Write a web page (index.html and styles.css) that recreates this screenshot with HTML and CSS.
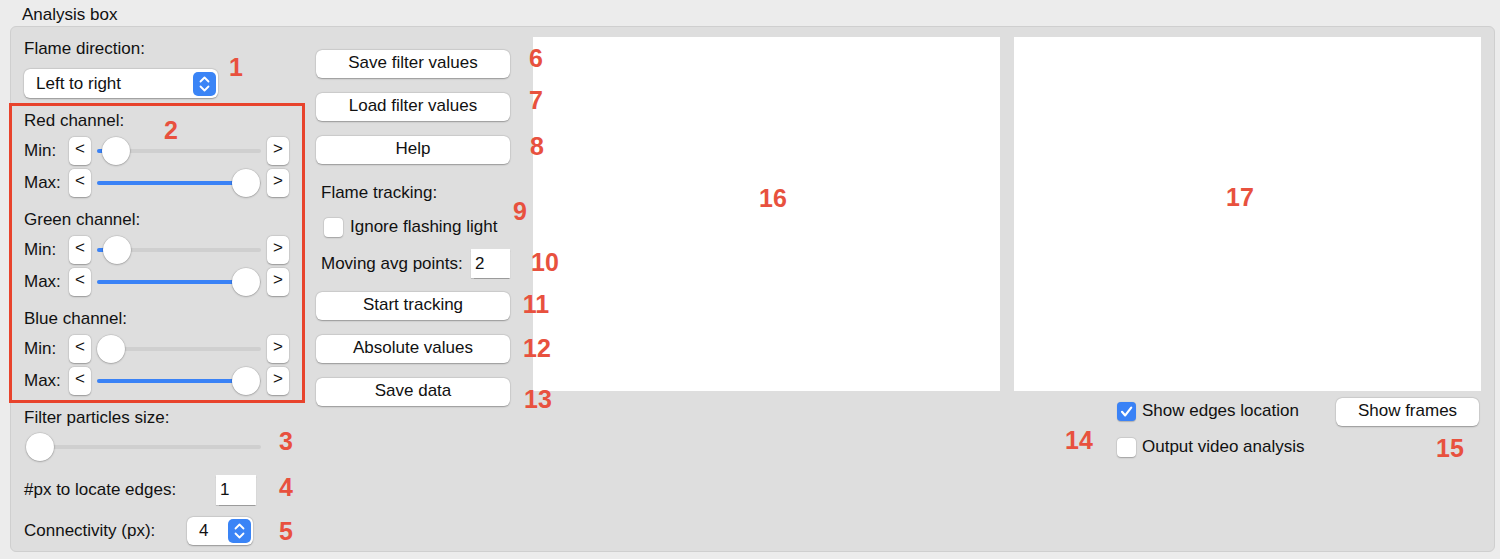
FILE: index.html
```html
<!DOCTYPE html>
<html>
<head>
<meta charset="utf-8">
<link rel="stylesheet" href="styles.css">
</head>
<body>
<div class="title">Analysis box</div>
<div class="group">
  <div class="left">
    <div class="lbl">Flame direction:</div>
    <div class="popup wide">
      <span>Left to right</span>
      <svg class="stepper" width="23" height="24" viewBox="0 0 23 24"><rect width="23" height="24" rx="5" fill="#3a84f6"/><path d="M7.5 9.5 L11.5 5.5 L15.5 9.5" stroke="#fff" stroke-width="1.8" fill="none" stroke-linecap="round" stroke-linejoin="round"/><path d="M7.5 14.5 L11.5 18.5 L15.5 14.5" stroke="#fff" stroke-width="1.8" fill="none" stroke-linecap="round" stroke-linejoin="round"/></svg>
    </div>

    <div class="chan">
      <div class="lbl">Red channel:</div>
      <div class="srow first">
        <span class="rl">Min:</span><div class="sbtn">&lt;</div>
        <div class="slider" style="--v:0.04"><div class="track"></div><div class="fill"></div><div class="thumb"></div></div>
        <div class="sbtn">&gt;</div>
      </div>
      <div class="srow">
        <span class="rl">Max:</span><div class="sbtn">&lt;</div>
        <div class="slider" style="--v:0.995"><div class="track"></div><div class="fill"></div><div class="thumb"></div></div>
        <div class="sbtn">&gt;</div>
      </div>
    </div>

    <div class="chan">
      <div class="lbl">Green channel:</div>
      <div class="srow first">
        <span class="rl">Min:</span><div class="sbtn">&lt;</div>
        <div class="slider" style="--v:0.045"><div class="track"></div><div class="fill"></div><div class="thumb"></div></div>
        <div class="sbtn">&gt;</div>
      </div>
      <div class="srow">
        <span class="rl">Max:</span><div class="sbtn">&lt;</div>
        <div class="slider" style="--v:0.995"><div class="track"></div><div class="fill"></div><div class="thumb"></div></div>
        <div class="sbtn">&gt;</div>
      </div>
    </div>

    <div class="chan">
      <div class="lbl">Blue channel:</div>
      <div class="srow first">
        <span class="rl">Min:</span><div class="sbtn">&lt;</div>
        <div class="slider" style="--v:0"><div class="track"></div><div class="fill"></div><div class="thumb"></div></div>
        <div class="sbtn">&gt;</div>
      </div>
      <div class="srow">
        <span class="rl">Max:</span><div class="sbtn">&lt;</div>
        <div class="slider" style="--v:0.995"><div class="track"></div><div class="fill"></div><div class="thumb"></div></div>
        <div class="sbtn">&gt;</div>
      </div>
    </div>

    <div class="lbl filt">Filter particles size:</div>
    <div class="prow">
      <div class="slider long" style="--v:0"><div class="track"></div><div class="fill"></div><div class="thumb"></div></div>
    </div>

    <div class="pxrow">
      <span class="pxl">#px to locate edges:</span>
      <div class="field">1</div>
    </div>

    <div class="conrow">
      <span class="conl">Connectivity (px):</span>
      <div class="popup small">
        <span>4</span>
        <svg class="stepper" width="23" height="24" viewBox="0 0 23 24"><rect width="23" height="24" rx="5" fill="#3a84f6"/><path d="M7.5 9.5 L11.5 5.5 L15.5 9.5" stroke="#fff" stroke-width="1.8" fill="none" stroke-linecap="round" stroke-linejoin="round"/><path d="M7.5 14.5 L11.5 18.5 L15.5 14.5" stroke="#fff" stroke-width="1.8" fill="none" stroke-linecap="round" stroke-linejoin="round"/></svg>
      </div>
    </div>
  </div>

  <div class="mid">
    <div class="btn">Save filter values</div>
    <div class="btn gap">Load filter values</div>
    <div class="btn gap">Help</div>
    <div class="lbl mlbl">Flame tracking:</div>
    <div class="chkrow ignore"><span class="cb"></span><span>Ignore flashing light</span></div>
    <div class="avg"><span>Moving avg points:</span><div class="field">2</div></div>
    <div class="btn start">Start tracking</div>
    <div class="btn gap">Absolute values</div>
    <div class="btn gap">Save data</div>
  </div>

  <div class="right">
    <div class="panels">
      <div class="panel"></div>
      <div class="panel"></div>
    </div>
    <div class="below">
      <div class="checks">
        <div class="chkrow"><span class="cb on"><svg width="19" height="19" viewBox="0 0 19 19"><path d="M5 9.8 L8.2 13.4 L14.2 5.6" stroke="#fff" stroke-width="2.2" fill="none" stroke-linecap="round" stroke-linejoin="round"/></svg></span><span>Show edges location</span></div>
        <div class="chkrow second"><span class="cb"></span><span>Output video analysis</span></div>
      </div>
      <div class="btn frames">Show frames</div>
    </div>
  </div>
</div>

<div class="redbox"></div>
<div class="ann a1">1</div>
<div class="ann a2">2</div>
<div class="ann a3">3</div>
<div class="ann a4">4</div>
<div class="ann a5">5</div>
<div class="ann a6">6</div>
<div class="ann a7">7</div>
<div class="ann a8">8</div>
<div class="ann a9">9</div>
<div class="ann a10">10</div>
<div class="ann a11">11</div>
<div class="ann a12">12</div>
<div class="ann a13">13</div>
<div class="ann a14">14</div>
<div class="ann a15">15</div>
<div class="ann a16">16</div>
<div class="ann a17">17</div>
</body>
</html>
```

FILE: styles.css
```css
* { box-sizing: border-box; }

html, body {
  margin: 0;
  padding: 0;
}

body {
  width: 1500px;
  height: 559px;
  overflow: hidden;
  position: relative;
  background: #ececec;
  font-family: "Liberation Sans", Arial, sans-serif;
  font-size: 17px;
  color: #111;
}

.title {
  height: 26px;
  padding: 5px 0 0 22px;
  line-height: 20px;
}

.group {
  margin-left: 10px;
  width: 1485px;
  height: 526px;
  background: #dedede;
  border: 1px solid #cfcfcf;
  border-radius: 6px;
  display: flex;
}

/* ---------- left column ---------- */
.left {
  width: 305px;
  padding: 12px 0 0 13px;
  display: flex;
  flex-direction: column;
}

.lbl {
  height: 20px;
  line-height: 20px;
  white-space: nowrap;
}

.popup {
  background: #fff;
  border-radius: 6px;
  box-shadow: 0 0.5px 1.5px rgba(0,0,0,0.3), 0 0 0 0.5px rgba(0,0,0,0.06);
  display: flex;
  align-items: center;
  justify-content: space-between;
  padding: 0 2px 0 12px;
}
.popup.wide {
  margin-top: 10px;
  width: 194px;
  height: 29px;
}
.popup.small {
  width: 66px;
  height: 28px;
}
.stepper { display: block; }

.chan {
  margin-top: 13px;
  display: flex;
  flex-direction: column;
}

.srow {
  display: flex;
  align-items: center;
  height: 28px;
  margin-top: 4px;
}
.srow.first { margin-top: 6px; }
.rl { width: 45px; }

.sbtn {
  width: 22px;
  height: 28px;
  background: #fff;
  border-radius: 5px;
  box-shadow: 0 0.5px 1.5px rgba(0,0,0,0.3), 0 0 0 0.5px rgba(0,0,0,0.05);
  text-align: center;
  line-height: 24px;
}

.slider {
  position: relative;
  width: 164px;
  height: 28px;
  margin: 0 6px;
}
.slider.long {
  width: 235px;
  margin: 0;
}
.track {
  position: absolute;
  left: 0;
  right: 0;
  top: 12px;
  height: 4px;
  border-radius: 2px;
  background: #cfcfcf;
}
.fill {
  position: absolute;
  left: 0;
  top: 12px;
  height: 4px;
  border-radius: 2px;
  background: #3a82f6;
  width: calc((100% - 28px) * var(--v) + 14px);
}
.slider[style="--v:0"] .fill { display: none; }
.thumb {
  position: absolute;
  top: 0;
  width: 28px;
  height: 28px;
  border-radius: 50%;
  background: #fff;
  box-shadow: 0 0.5px 2px rgba(0,0,0,0.35), 0 0 0 0.5px rgba(0,0,0,0.08);
  left: calc((100% - 28px) * var(--v));
}

.filt { margin-top: 13px; }
.prow {
  margin-top: 5px;
  height: 28px;
  padding-left: 2px;
}

.pxrow {
  margin-top: 14px;
  height: 30px;
  display: flex;
  align-items: center;
}
.pxl { width: 192px; }

.field {
  background: #fff;
  box-shadow: 0 0.5px 1px rgba(0,0,0,0.3);
  padding-left: 4px;
  line-height: 30px;
}
.pxrow .field { width: 40px; height: 30px; }

.conrow {
  margin-top: 12px;
  height: 28px;
  display: flex;
  align-items: center;
}
.conl { width: 163px; }

/* ---------- middle column ---------- */
.mid {
  width: 194px;
  padding-top: 23px;
  display: flex;
  flex-direction: column;
}

.btn {
  height: 28px;
  width: 194px;
  background: #fff;
  border-radius: 6px;
  box-shadow: 0 0.5px 1.5px rgba(0,0,0,0.3), 0 0 0 0.5px rgba(0,0,0,0.05);
  text-align: center;
  line-height: 26px;
  white-space: nowrap;
}
.btn.gap { margin-top: 15px; }
.btn.start { margin-top: 14px; }

.mlbl {
  margin-top: 19px;
  padding-left: 5px;
}

.chkrow {
  height: 20px;
  display: flex;
  align-items: center;
  gap: 7px;
  white-space: nowrap;
}
.chkrow.ignore {
  margin-top: 14px;
  padding-left: 8px;
}

.cb {
  width: 19px;
  height: 19px;
  border-radius: 4px;
  background: #fff;
  box-shadow: 0 0.5px 1.5px rgba(0,0,0,0.25), 0 0 0 0.5px rgba(0,0,0,0.08);
  flex: none;
}
.cb.on {
  background: #3a82f6;
  box-shadow: 0 0.5px 1px rgba(0,0,0,0.2);
}
.cb svg { display: block; }

.avg {
  margin-top: 12px;
  height: 29px;
  padding-left: 5px;
  display: flex;
  align-items: center;
  justify-content: space-between;
}
.avg .field {
  width: 39px;
  height: 29px;
  line-height: 29px;
}

/* ---------- right area ---------- */
.right {
  margin-left: 23px;
  width: 948px;
  padding-top: 10px;
}
.panels {
  display: flex;
  gap: 14px;
}
.panel {
  width: 467px;
  height: 354px;
  background: #fff;
}
.below {
  margin-top: 7px;
  display: flex;
  align-items: flex-start;
}
.checks {
  margin-left: 584px;
  padding-top: 3px;
  display: flex;
  flex-direction: column;
}
.checks .chkrow { gap: 6px; }
.checks .chkrow.second { margin-top: 16px; }
.btn.frames {
  margin-left: auto;
  margin-right: 2px;
  width: 143px;
}

/* ---------- annotations ---------- */
.redbox {
  position: absolute;
  left: 9px;
  top: 103px;
  width: 296px;
  height: 300px;
  border: 3px solid #e8432c;
}

.ann {
  position: absolute;
  font-size: 25px;
  font-weight: bold;
  line-height: 25px;
  color: #e8513e;
  transform: translate(-50%, -50%);
  white-space: nowrap;
}
.a1 { left: 236px; top: 67px; }
.a2 { left: 171px; top: 130px; }
.a3 { left: 286px; top: 441px; }
.a4 { left: 286px; top: 487px; }
.a5 { left: 286px; top: 531px; }
.a6 { left: 536px; top: 58px; }
.a7 { left: 536px; top: 100px; }
.a8 { left: 537px; top: 146px; }
.a9 { left: 520px; top: 211px; }
.a10 { left: 545px; top: 262px; }
.a11 { left: 536px; top: 304px; }
.a12 { left: 537px; top: 348px; }
.a13 { left: 538px; top: 399px; }
.a14 { left: 1079px; top: 440px; }
.a15 { left: 1450px; top: 448px; }
.a16 { left: 773px; top: 198px; }
.a17 { left: 1240px; top: 197px; }
```
